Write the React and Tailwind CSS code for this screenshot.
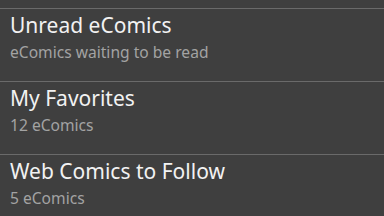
const ITEMS = [
  { title: 'Unread eComics', sub: 'eComics waiting to be read' },
  { title: 'My Favorites', sub: '12 eComics' },
  { title: 'Web Comics to Follow', sub: '5 eComics' },
];

export default function App() {
  return (
    <div
      className="w-[384px] h-[216px] overflow-hidden bg-[#3f3f3f]"
      style={{ fontFamily: '"Noto Sans", "Open Sans", sans-serif' }}
    >
      <div className="h-[8px]" />
      {ITEMS.map((it) => (
        <div key={it.title} className="border-t border-[#6a6a6a] h-[73px] pl-[10px] pt-[3px]">
          <div className="text-[21px] leading-[26px] text-[#f2f2f2]">{it.title}</div>
          <div className="text-[15.6px] leading-[20px] mt-[4px] text-[#a3a3a3]">{it.sub}</div>
        </div>
      ))}
    </div>
  );
}
